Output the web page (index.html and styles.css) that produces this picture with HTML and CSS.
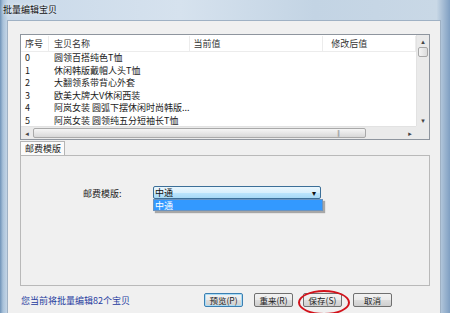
FILE: index.html
```html
<!DOCTYPE html>
<html lang="zh-CN">
<head>
    <meta charset="UTF-8">
    <title>批量编辑宝贝</title>
    <link rel="stylesheet" href="styles.css">
</head>
<body>
    <div class="window">
        <div class="titlebar">批量编辑宝贝</div>
        <div class="client">
            <!-- item list -->
            <div class="list">
                <div class="list-main">
                    <div class="list-head">
                        <span class="col c1">序号</span>
                        <span class="col c2">宝贝名称</span>
                        <span class="col c3">当前值</span>
                        <span class="col c4">修改后值</span>
                    </div>
                    <div class="row"><span class="col c1">0</span><span class="col c2">圆领百搭纯色T恤</span></div>
                    <div class="row"><span class="col c1">1</span><span class="col c2">休闲韩版戴帽人头T恤</span></div>
                    <div class="row"><span class="col c1">2</span><span class="col c2">大翻领系带背心外套</span></div>
                    <div class="row"><span class="col c1">3</span><span class="col c2">欧美大牌大V休闲西装</span></div>
                    <div class="row"><span class="col c1">4</span><span class="col c2">阿岚女装 圆弧下摆休闲时尚韩版...</span></div>
                    <div class="row"><span class="col c1">5</span><span class="col c2">阿岚女装 圆领纯五分短袖长T恤</span></div>
                </div>
                <div class="vscroll">
                    <span class="arrow">&#9652;</span>
                    <span class="vthumb"></span>
                    <span class="vspace"></span>
                    <span class="arrow">&#9662;</span>
                </div>
                <div class="hscroll">
                    <span class="arrow">&#9666;</span>
                    <span class="hthumb"><i>|||</i></span>
                    <span class="hspace"></span>
                    <span class="arrow">&#9656;</span>
                </div>
                <div class="corner"></div>
            </div>

            <!-- tab -->
            <div class="tabs">
                <span class="tab">邮费模版</span>
            </div>
            <div class="panel">
                <div class="field">
                    <label>邮费模版:</label>
                    <div class="combo">
                        <div class="select">中通<span class="drop">&#9662;</span></div>
                        <div class="option">中通</div>
                    </div>
                </div>
            </div>

            <div class="footer">
                <span class="note">您当前将批量编辑82个宝贝</span>
                <div class="buttons">
                    <button class="btn btn-default">预览(P)</button>
                    <button class="btn">重来(R)</button>
                    <button class="btn btn-save">保存(S)</button>
                    <button class="btn">取消</button>
                </div>
            </div>
        </div>
    </div>
</body>
</html>
```

FILE: styles.css
```css
* {
    margin: 0;
    padding: 0;
    box-sizing: border-box;
}

body {
    width: 450px;
    height: 313px;
    overflow: hidden;
    font-family: "Noto Sans CJK SC", "DejaVu Sans", sans-serif;
    font-size: 9px;
    color: #222;
    background: #9db6cf;
}

.window {
    height: 313px;
    display: flex;
    flex-direction: column;
    padding: 0 9px 0 7px;
    background: linear-gradient(to right, #6f93b8 0, #a9c2da 3px, #c9d9e9 8px, #d6e2ee 40%, #c3d4e4 70%, #c9d8e6 97%, #7f9fc2 100%);
}

.titlebar {
    height: 20px;
    line-height: 20px;
    margin-left: -4px;
    font-size: 9px;
    color: #111;
    text-shadow: 0 0 4px #fff;
}

.client {
    flex: 1;
    display: flex;
    flex-direction: column;
    background: #f0f0f0;
    border: 1px solid #9fb1c4;
    border-bottom: none;
    padding: 13px 10px 0 12px;
}

/* list view */
.list {
    height: 106px;
    border: 1px solid #8e959e;
    background: #fff;
    display: grid;
    grid-template-columns: 1fr 13px;
    grid-template-rows: 1fr 13px;
}

.list-main {
    overflow: hidden;
    padding-top: 1px;
}

.list-head {
    display: flex;
    height: 16px;
    align-items: center;
    border-bottom: 1px solid #ececec;
    color: #333;
}

.list-head .col {
    border-right: 1px solid #ececec;
    height: 16px;
    line-height: 16px;
}

.row {
    display: flex;
    height: 12.5px;
    line-height: 12.5px;
    color: #1a1a1a;
}

.col {
    padding-left: 4px;
    white-space: nowrap;
}

.c1 { width: 28px; }
.c2 { width: 141px; padding-left: 5px; }
.c3 { width: 134px; }
.c4 { width: 93px; padding-left: 8px; }

.vscroll, .hscroll {
    background: #eaeaea;
    display: flex;
    color: #444;
    font-size: 7px;
}

.vscroll {
    flex-direction: column;
    align-items: center;
    border-left: 1px solid #e2e2e2;
}

.hscroll {
    align-items: center;
    border-top: 1px solid #e2e2e2;
}

.arrow {
    width: 12px;
    height: 12px;
    line-height: 12px;
    text-align: center;
}

.vthumb {
    width: 10px;
    height: 10px;
    border: 1px solid #a7a7a7;
    border-radius: 2px;
    background: linear-gradient(to right, #f4f4f4, #dcdcdc);
}

.vspace { flex: 1; }

.hthumb {
    width: 333px;
    height: 10px;
    border: 1px solid #a9a9a9;
    border-radius: 2px;
    background: linear-gradient(#f5f5f5, #d8d8d8);
    display: flex;
    justify-content: flex-end;
    padding-right: 26px;
}

.hthumb i {
    font-style: normal;
    font-size: 6px;
    line-height: 8px;
    color: #888;
    letter-spacing: -1px;
}

.hspace { flex: 1; }

.corner { background: #eaeaea; }

/* tab */
.tabs {
    height: 14px;
    display: flex;
    margin-top: 1px;
}

.tab {
    width: 45px;
    height: 14px;
    line-height: 13px;
    padding-left: 4px;
    background: #fbfbfb;
    border: 1px solid #b5b5b5;
    border-bottom: none;
    color: #222;
}

.panel {
    height: 131px;
    border: 1px solid #b9b9b9;
    background: #f0f0f0;
    padding-top: 30px;
}

.field {
    display: flex;
    align-items: flex-start;
}

.field label {
    width: 132px;
    padding-left: 62px;
    padding-top: 1px;
    color: #222;
}

.combo {
    width: 168px;
}

.select {
    height: 13px;
    line-height: 11px;
    border: 1px solid #3c6f98;
    border-radius: 2px;
    padding-left: 1px;
    background: linear-gradient(#eaf6fd 0, #d9f0fc 50%, #bee6fd 51%, #a7d9f5 100%);
    display: flex;
    justify-content: space-between;
    color: #111;
}

.drop {
    width: 12px;
    font-size: 8px;
    text-align: center;
    color: #111;
}

.option {
    height: 12px;
    line-height: 11px;
    margin-right: -2px;
    padding-left: 1px;
    background: #3399ff;
    color: #fff;
    border: 1px solid #6a93c0;
    box-shadow: 2px 2px 1px rgba(0, 0, 0, 0.3);
}

/* footer */
.footer {
    display: flex;
    align-items: center;
    height: 26px;
    padding-top: 2px;
}

.note {
    width: 184px;
    color: #263c9f;
    padding-left: 1px;
}

.buttons {
    display: flex;
    gap: 11px;
}

.btn {
    position: relative;
    width: 39px;
    height: 14px;
    font-family: "Noto Sans CJK SC", "DejaVu Sans", sans-serif;
    font-size: 8.5px;
    line-height: 12px;
    color: #222;
    border: 1px solid #707070;
    border-radius: 2px;
    background: linear-gradient(#f2f2f2 0, #ebebeb 50%, #dddddd 51%, #cfcfcf 100%);
}

.btn-default {
    border-color: #3c7fb1;
    box-shadow: inset 0 0 0 1px #a9dcf6;
}

.btn-save {
    margin-left: -1px;
}

/* red marking around the save button */
.btn-save::after {
    content: "";
    position: absolute;
    left: -6px;
    top: -4px;
    width: 48px;
    height: 21px;
    border: 2.5px solid #d2121b;
    border-radius: 50%;
}
```
